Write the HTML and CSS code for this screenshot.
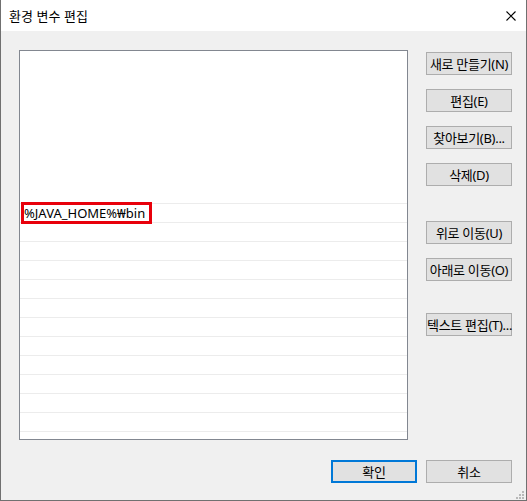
FILE: index.html
```html
<!DOCTYPE html>
<html lang="ko">
<head>
<meta charset="utf-8">
<title>환경 변수 편집</title>
<link rel="stylesheet" href="styles.css">
</head>
<body>
<div class="window">
  <div class="titlebar">
    <span class="title">환경 변수 편집</span>
    <svg class="close" width="10" height="10" viewBox="0 0 10 10"><path d="M0.5 0.5L9.5 9.5M9.5 0.5L0.5 9.5" stroke="#000" stroke-width="1.1" fill="none"/></svg>
  </div>
  <div class="content">
    <div class="main">
      <div class="list">
        <div class="spacer"></div>
        <div class="row"><span class="item">%JAVA_HOME%₩bin</span><span class="mark"></span></div>
        <div class="row"></div>
        <div class="row"></div>
        <div class="row"></div>
        <div class="row"></div>
        <div class="row"></div>
        <div class="row"></div>
        <div class="row"></div>
        <div class="row"></div>
        <div class="row"></div>
        <div class="row"></div>
        <div class="row"></div>
        <div class="row"></div>
      </div>
      <div class="side">
        <button class="btn">새로 만들기(N)</button>
        <button class="btn g14">편집(E)</button>
        <button class="btn g14">찾아보기(B)...</button>
        <button class="btn g14">삭제(D)</button>
        <button class="btn g35">위로 이동(U)</button>
        <button class="btn g14">아래로 이동(O)</button>
        <button class="btn g32">텍스트 편집(T)...</button>
      </div>
    </div>
    <div class="footer">
      <button class="btn primary">확인</button>
      <button class="btn">취소</button>
    </div>
  </div>
  <svg class="grip" width="8" height="8" viewBox="0 0 8 8"><g fill="#b8b8b8"><rect x="6" y="0" width="2" height="2"/><rect x="3" y="3" width="2" height="2"/><rect x="6" y="3" width="2" height="2"/><rect x="0" y="6" width="2" height="2"/><rect x="3" y="6" width="2" height="2"/><rect x="6" y="6" width="2" height="2"/></g></svg>
</div>
</body>
</html>
```
FILE: styles.css
```css
* { box-sizing: border-box; }
html, body { margin: 0; padding: 0; }
body {
  font-family: "Noto Sans", "Noto Sans CJK KR", sans-serif;
  font-size: 13px;
  color: #000;
  background: #f0f0f0;
}
.window {
  position: relative;
  width: 527px;
  height: 501px;
  border: 1px solid #707070;
  border-top: none;
  background: #f0f0f0;
  display: flex;
  flex-direction: column;
}
.titlebar {
  height: 31px;
  background: #fff;
  display: flex;
  align-items: center;
  justify-content: space-between;
  padding-left: 8px;
  padding-right: 10px;
  flex: none;
}
.title {
  font-family: "Noto Sans CJK KR", sans-serif;
  font-size: 13px;
  line-height: 16px;
}
.close { display: block; margin-top: 1px; }
.content {
  flex: 1;
  padding: 19px 14px 0 18px;
  display: flex;
  flex-direction: column;
}
.main {
  display: flex;
  align-items: flex-start;
}
.list {
  width: 389px;
  height: 390px;
  border: 1px solid #828790;
  background: #fff;
  overflow: hidden;
  flex: none;
}
.spacer { height: 152px; }
.row {
  position: relative;
  height: 19px;
  border-top: 1px solid #ececec;
  padding-left: 4px;
  line-height: 18px;
  white-space: nowrap;
}
.item { font-size: 13px; }
.mark {
  position: absolute;
  z-index: 2;
  left: 1px;
  top: -2px;
  width: 131px;
  height: 22px;
  border: 3px solid #e8000b;
}
.side {
  margin-left: 18px;
  margin-top: 2px;
  width: 86px;
  display: flex;
  flex-direction: column;
}
.btn {
  width: 86px;
  height: 23px;
  padding: 0;
  margin: 0;
  background: #e1e1e1;
  border: 1px solid #adadad;
  font-family: "Noto Sans", "Noto Sans CJK KR", sans-serif;
  font-size: 13px;
  color: #000;
  white-space: nowrap;
  letter-spacing: -0.3px;
  line-height: 20px;
}
.g14 { margin-top: 14px; }
.g35 { margin-top: 35px; }
.g32 { margin-top: 32px; }
.footer {
  margin-top: 20px;
  display: flex;
  justify-content: flex-end;
  gap: 9px;
}
.primary {
  border: 2px solid #0078d7;
}
.grip {
  position: absolute;
  right: 2px;
  bottom: 1px;
}
```
